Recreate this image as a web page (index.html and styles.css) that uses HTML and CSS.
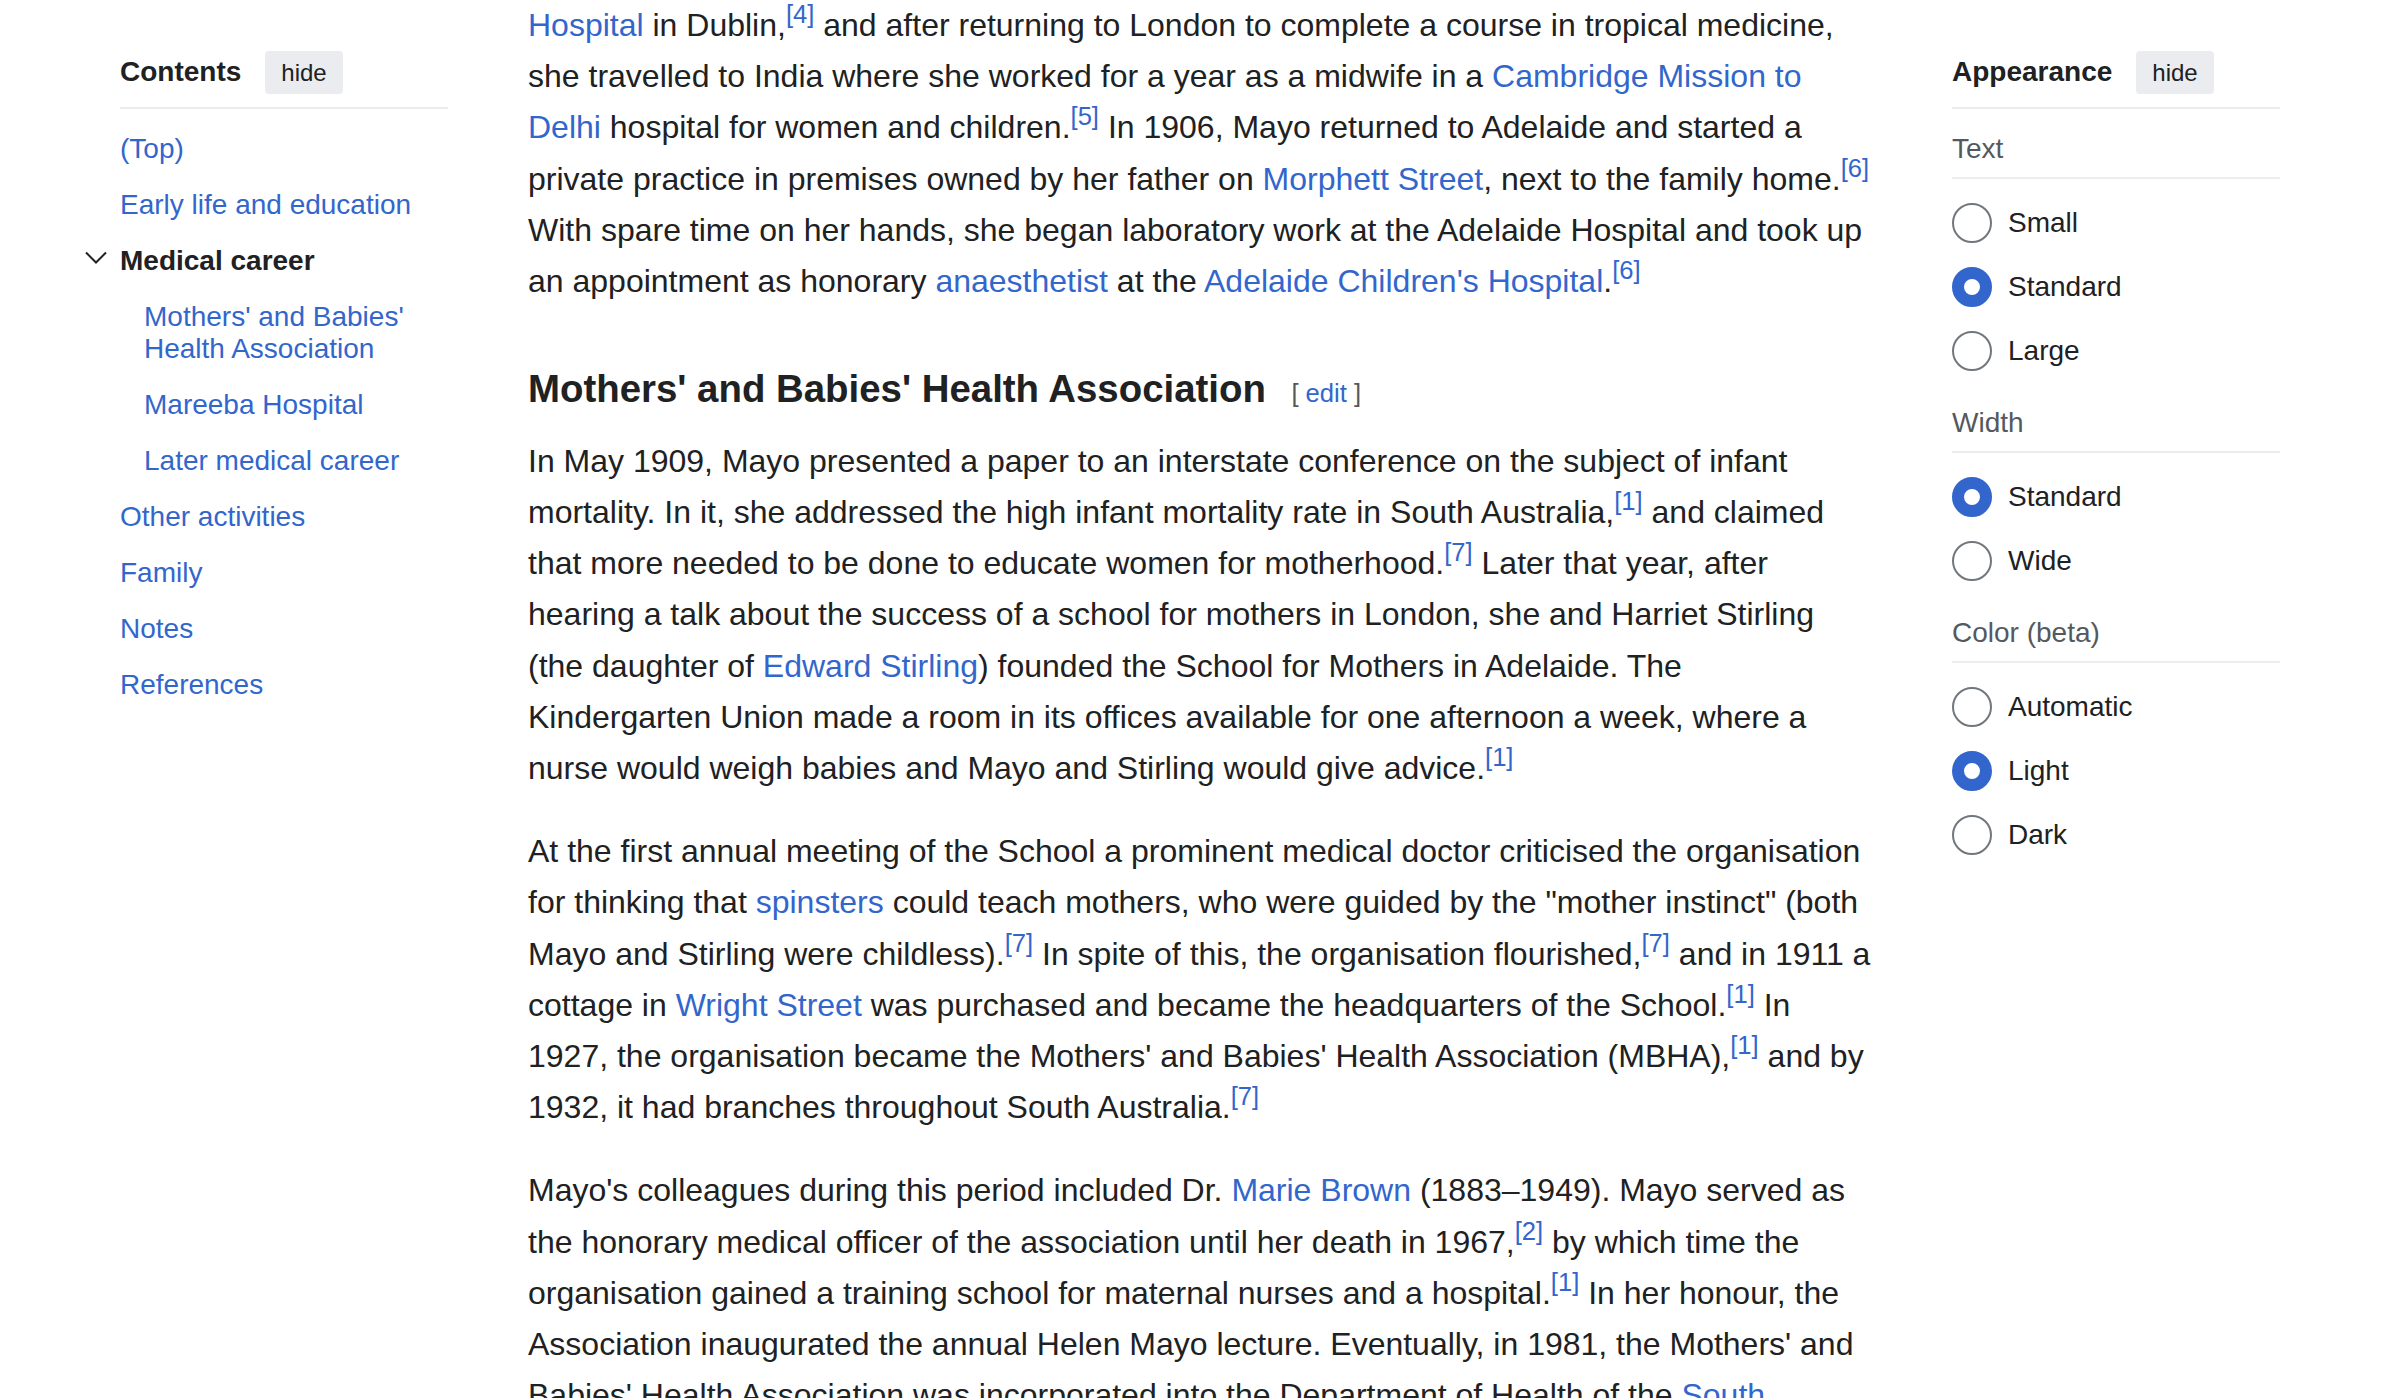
FILE: index.html
```html
<!DOCTYPE html>
<html lang="en">
<head>
<meta charset="utf-8">
<title>Helen Mayo - Wikipedia</title>
<link rel="stylesheet" href="styles.css">
</head>
<body>
<div class="page">
  <nav class="toc">
    <div class="panel-header">
      <span class="panel-title">Contents</span>
      <button class="hide-btn" type="button">hide</button>
    </div>
    <ul class="toc-list">
      <li class="toc-item"><a href="#" class="toc-link">(Top)</a></li>
      <li class="toc-item"><a href="#" class="toc-link">Early life and education</a></li>
      <li class="toc-item toc-expanded">
        <span class="toc-toggle" aria-hidden="true">
          <svg width="22" height="13" viewBox="0 0 22 13"><polyline points="1,1.5 11,11.5 21,1.5" fill="none" stroke="#202122" stroke-width="2"/></svg>
        </span>
        <a href="#" class="toc-link toc-active">Medical career</a>
        <ul class="toc-sublist">
          <li class="toc-item"><a href="#" class="toc-link">Mothers' and Babies' Health Association</a></li>
          <li class="toc-item"><a href="#" class="toc-link">Mareeba Hospital</a></li>
          <li class="toc-item"><a href="#" class="toc-link">Later medical career</a></li>
        </ul>
      </li>
      <li class="toc-item"><a href="#" class="toc-link">Other activities</a></li>
      <li class="toc-item"><a href="#" class="toc-link">Family</a></li>
      <li class="toc-item"><a href="#" class="toc-link">Notes</a></li>
      <li class="toc-item"><a href="#" class="toc-link">References</a></li>
    </ul>
  </nav>

  <main class="content">
    <p class="lead"><a href="#">Hospital</a> in Dublin,<sup class="ref"><a href="#">[4]</a></sup> and after returning to London to complete a course in tropical medicine, she travelled to India where she worked for a year as a midwife in a <a href="#">Cambridge Mission to Delhi</a> hospital for women and children.<sup class="ref"><a href="#">[5]</a></sup> In 1906, Mayo returned to Adelaide and started a private practice in premises owned by her father on <a href="#">Morphett Street</a>, next to the family home.<sup class="ref"><a href="#">[6]</a></sup> With spare time on her hands, she began laboratory work at the Adelaide Hospital and took up an appointment as honorary <a href="#">anaesthetist</a> at the <a href="#">Adelaide Children's Hospital</a>.<sup class="ref"><a href="#">[6]</a></sup></p>

    <h3 class="section-heading">Mothers' and Babies' Health Association<span class="editsection"><span class="bracket bracket-open">[</span><a href="#">edit</a><span class="bracket bracket-close">]</span></span></h3>

    <p>In May 1909, Mayo presented a paper to an interstate conference on the subject of infant mortality. In it, she addressed the high infant mortality rate in South Australia,<sup class="ref"><a href="#">[1]</a></sup> and claimed that more needed to be done to educate women for motherhood.<sup class="ref"><a href="#">[7]</a></sup> Later that year, after hearing a talk about the success of a school for mothers in London, she and Harriet Stirling (the daughter of <a href="#">Edward Stirling</a>) founded the School for Mothers in Adelaide. The Kindergarten Union made a room in its offices available for one afternoon a week, where a nurse would weigh babies and Mayo and Stirling would give advice.<sup class="ref"><a href="#">[1]</a></sup></p>

    <p>At the first annual meeting of the School a prominent medical doctor criticised the organisation for thinking that <a href="#">spinsters</a> could teach mothers, who were guided by the "mother instinct" (both Mayo and Stirling were childless).<sup class="ref"><a href="#">[7]</a></sup> In spite of this, the organisation flourished,<sup class="ref"><a href="#">[7]</a></sup> and in 1911 a cottage in <a href="#">Wright Street</a> was purchased and became the headquarters of the School.<sup class="ref"><a href="#">[1]</a></sup> In 1927, the organisation became the Mothers' and Babies' Health Association (MBHA),<sup class="ref"><a href="#">[1]</a></sup> and by 1932, it had branches throughout South Australia.<sup class="ref"><a href="#">[7]</a></sup></p>

    <p>Mayo's colleagues during this period included Dr. <a href="#">Marie Brown</a> (1883–1949). Mayo served as the honorary medical officer of the association until her death in 1967,<sup class="ref"><a href="#">[2]</a></sup> by which time the organisation gained a training school for maternal nurses and a hospital.<sup class="ref"><a href="#">[1]</a></sup> In her honour, the Association inaugurated the annual Helen Mayo lecture. Eventually, in 1981, the Mothers' and Babies' Health Association was incorporated into the Department of Health of the <a href="#">South Australian Government</a>.</p>
  </main>

  <aside class="appearance">
    <div class="panel-header">
      <span class="panel-title">Appearance</span>
      <button class="hide-btn" type="button">hide</button>
    </div>

    <div class="option-group">
      <div class="group-label">Text</div>
      <div class="radio-row"><span class="radio"></span><span class="radio-label">Small</span></div>
      <div class="radio-row"><span class="radio radio-checked"></span><span class="radio-label">Standard</span></div>
      <div class="radio-row"><span class="radio"></span><span class="radio-label">Large</span></div>
    </div>

    <div class="option-group">
      <div class="group-label">Width</div>
      <div class="radio-row"><span class="radio radio-checked"></span><span class="radio-label">Standard</span></div>
      <div class="radio-row"><span class="radio"></span><span class="radio-label">Wide</span></div>
    </div>

    <div class="option-group">
      <div class="group-label">Color (beta)</div>
      <div class="radio-row"><span class="radio"></span><span class="radio-label">Automatic</span></div>
      <div class="radio-row"><span class="radio radio-checked"></span><span class="radio-label">Light</span></div>
      <div class="radio-row"><span class="radio"></span><span class="radio-label">Dark</span></div>
    </div>
  </aside>
</div>
</body>
</html>
```
FILE: styles.css
```css
html, body {
  margin: 0;
  padding: 0;
  height: 100%;
  overflow: hidden;
  background: #ffffff;
}

body {
  font-family: "Liberation Sans", Arial, sans-serif;
  color: #202122;
}

a {
  color: #3366cc;
  text-decoration: none;
}

.page {
  display: grid;
  grid-template-columns: 328px 1344px 328px;
  column-gap: 80px;
  padding: 0 120px;
  align-items: start;
}

/* ---------- side panels ---------- */
.toc,
.appearance {
  padding-top: 50px;
  font-size: 28px;
}

.panel-header {
  display: flex;
  align-items: center;
  height: 44px;
  padding-bottom: 13px;
  border-bottom: 2px solid #eaecf0;
}

.panel-title {
  font-weight: bold;
  font-size: 28px;
  line-height: 32px;
}

.hide-btn {
  margin-left: 24px;
  height: 43px;
  padding: 0 16px;
  border: 0;
  border-radius: 4px;
  background: #eaecf0;
  color: #202122;
  font-family: inherit;
  font-size: 24px;
  line-height: 43px;
}

/* ---------- table of contents ---------- */
.toc-list,
.toc-sublist {
  list-style: none;
  margin: 0;
  padding: 0;
}

.toc-list {
  margin-top: 12px;
}

.toc-item {
  position: relative;
}

.toc-link {
  display: block;
  padding: 12px 0;
  line-height: 32px;
}

.toc-active {
  color: #202122;
  font-weight: bold;
}

.toc-sublist {
  padding-left: 24px;
}

.toc-toggle {
  position: absolute;
  left: -35px;
  top: 18px;
  width: 22px;
  height: 13px;
  display: block;
}

.toc-toggle svg {
  display: block;
}

/* ---------- main content ---------- */
.content {
  font-size: 32px;
  line-height: 51.2px;
}

.content p {
  margin: 16px 0 32px;
}

.content p.lead {
  margin-top: 0;
}

.ref {
  font-size: 25.6px;
  line-height: 1;
  vertical-align: 12.8px;
  white-space: nowrap;
}

.section-heading {
  font-size: 38.4px;
  line-height: 1.6;
  font-weight: bold;
  margin: 11.52px 0 0;
  padding-top: 19.2px;
  color: #202122;
}

.editsection {
  font-size: 25.6px;
  font-weight: normal;
  margin-left: 25.6px;
  white-space: nowrap;
}

.bracket {
  color: #54595d;
}

.bracket-open {
  margin-right: 7px;
}

.bracket-close {
  margin-left: 7px;
}

/* ---------- appearance panel ---------- */
.option-group {
  padding-top: 24px;
}

.group-label {
  color: #54595d;
  line-height: 32px;
  padding-bottom: 12px;
  border-bottom: 2px solid #eaecf0;
  margin-bottom: 12px;
}

.radio-row {
  display: flex;
  align-items: center;
  height: 64px;
}

.radio {
  box-sizing: border-box;
  width: 40px;
  height: 40px;
  border: 2px solid #72777d;
  border-radius: 50%;
  background: #ffffff;
  flex: 0 0 auto;
}

.radio-checked {
  border: 12px solid #3366cc;
}

.radio-label {
  margin-left: 16px;
  line-height: 32px;
  color: #202122;
}
```
